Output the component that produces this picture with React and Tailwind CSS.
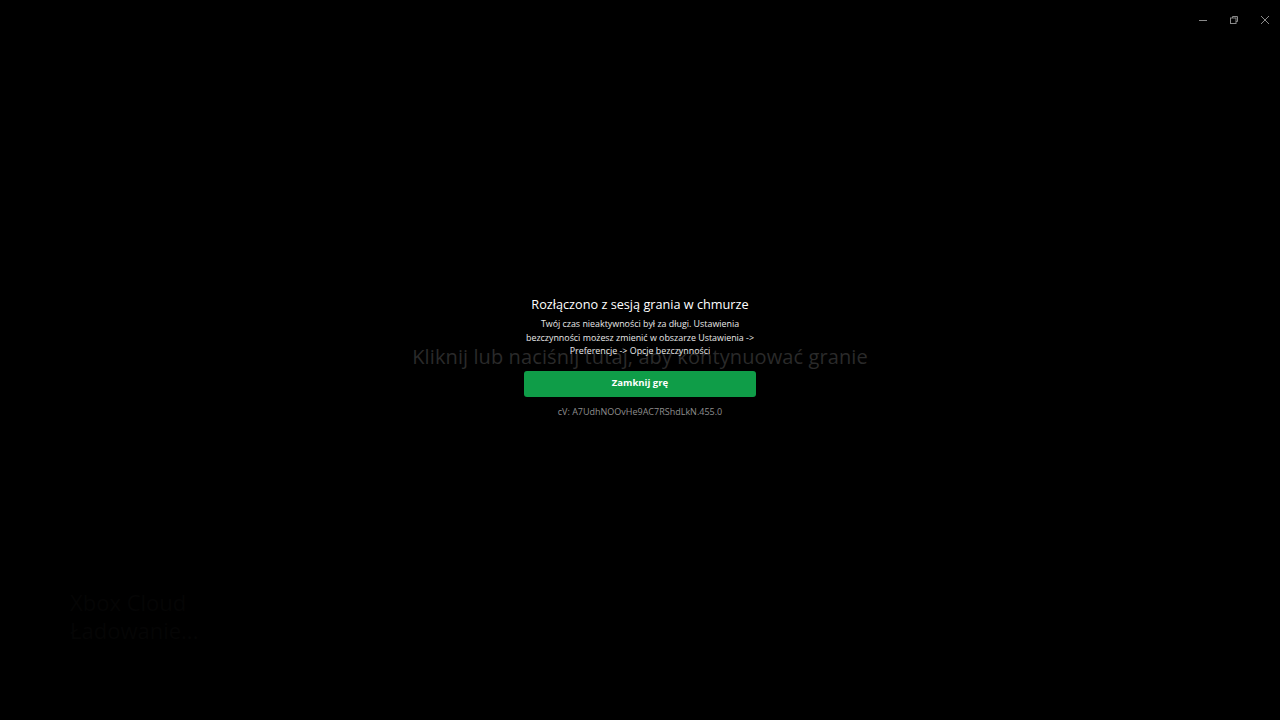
import React from 'react';

const font = { fontFamily: '"Open Sans", "Noto Sans", sans-serif' };

const WindowControls = () => (
  <div className="absolute top-0 right-0 flex h-10 items-center text-[#8a8a8a]">
    <div className="flex h-10 w-[31px] items-center justify-center">
      <svg width="10" height="10" viewBox="0 0 10 10">
        <path d="M1 5.5h8" stroke="currentColor" strokeWidth="1" />
      </svg>
    </div>
    <div className="flex h-10 w-[31px] items-center justify-center">
      <svg width="10" height="10" viewBox="0 0 10 10" fill="none">
        <rect x="1.5" y="3" width="5.5" height="5.5" stroke="currentColor" strokeWidth="1" />
        <path d="M3.5 3V1.5h5v5H7" stroke="currentColor" strokeWidth="1" />
      </svg>
    </div>
    <div className="flex h-10 w-[31px] items-center justify-center">
      <svg width="10" height="10" viewBox="0 0 10 10">
        <path d="M1 1l8 8M9 1L1 9" stroke="currentColor" strokeWidth="1" />
      </svg>
    </div>
  </div>
);

export default function App() {
  return (
    <div className="relative h-[720px] w-[1280px] overflow-hidden bg-black" style={font}>
      <WindowControls />

      {/* barely visible leftovers of the stream behind */}
      <div className="absolute left-[70px] top-[588px] text-[22px] leading-7 text-[#050505]">
        <div>Xbox Cloud</div>
        <div>Ładowanie...</div>
      </div>

      <div className="grid h-full place-items-center">
        <div className="col-start-1 row-start-1 mb-[6px] text-[20px] tracking-[0.1px] text-[#2a2a2a]">
          Kliknij lub naciśnij tutaj, aby kontynuować granie
        </div>

        <div className="col-start-1 row-start-1 mb-[9px] flex w-[232px] flex-col items-center pt-[2px]">
          <h1 className="whitespace-nowrap text-[12.7px] leading-[18px] text-white">
            Rozłączono z sesją grania w chmurze
          </h1>
          <p className="-mx-1 mt-[4px] w-[240px] text-center text-[8.9px] leading-[13.5px] text-[#e8e8e8]">
            Twój czas nieaktywności był za długi. Ustawienia bezczynności możesz zmienić w obszarze
            Ustawienia -&gt; Preferencje -&gt; Opcje bezczynności
          </p>
          <button
            type="button"
            className="mt-[13px] h-[26px] w-[232px] rounded-[3px] bg-[#0f9d48] text-[9.5px] font-bold text-white"
          >
            Zamknij grę
          </button>
          <div className="mt-[8px] text-[9px] text-[#8e8e8e]">cV: A7UdhNOOvHe9AC7RShdLkN.455.0</div>
        </div>
      </div>
    </div>
  );
}
